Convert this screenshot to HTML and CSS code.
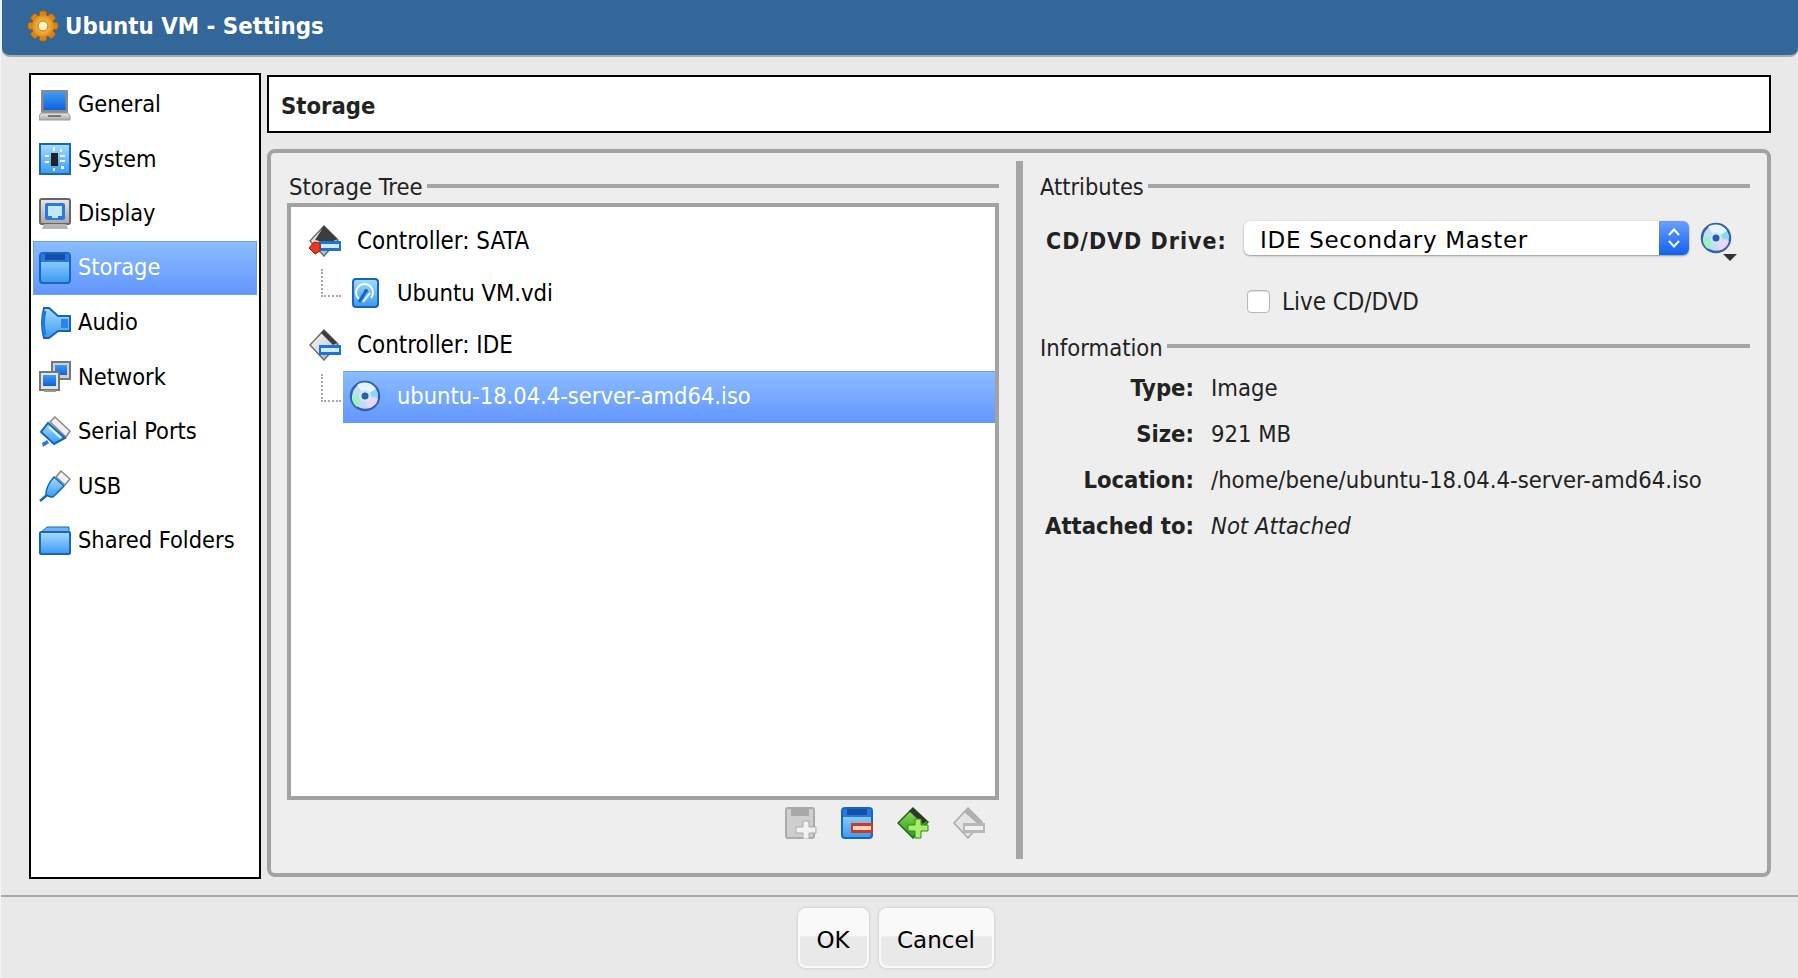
FILE: index.html
```html
<!DOCTYPE html>
<html lang="en">
<head>
<meta charset="utf-8">
<title>Ubuntu VM - Settings</title>
<link rel="stylesheet" href="styles.css">
</head>
<body>
<svg class="defs" width="0" height="0" aria-hidden="true">
  <defs>
    <linearGradient id="blue" x1="0" y1="0" x2="0" y2="1"><stop offset="0" stop-color="#a8dcff"/><stop offset="1" stop-color="#3a9af0"/></linearGradient>
    <linearGradient id="screen" x1="0" y1="0" x2="0" y2="1"><stop offset="0" stop-color="#3f9bf5"/><stop offset="1" stop-color="#0f62e0"/></linearGradient>
    <linearGradient id="gray" x1="0" y1="0" x2="0" y2="1"><stop offset="0" stop-color="#e8e8e8"/><stop offset="1" stop-color="#a8a8a8"/></linearGradient>
    <linearGradient id="ctrlbody" x1="0" y1="0" x2="1" y2="1"><stop offset="0" stop-color="#fafafa"/><stop offset=".55" stop-color="#d8d8d8"/><stop offset="1" stop-color="#8c8c8c"/></linearGradient>
    <linearGradient id="green" x1="0" y1="0" x2="0" y2="1"><stop offset="0" stop-color="#8fe05a"/><stop offset="1" stop-color="#2c9a1c"/></linearGradient>
    <radialGradient id="goldg"><stop offset="0" stop-color="#ffe27a"/><stop offset="1" stop-color="#e08a10"/></radialGradient>

    <symbol id="i-floppy" viewBox="0 0 32 32">
      <rect x="1" y="1" width="30" height="30" rx="3" fill="url(#blue)" stroke="#1666c0" stroke-width="2"/>
      <rect x="2" y="2" width="28" height="8" fill="#2a78dc"/>
      <rect x="6" y="2" width="20" height="6" fill="#154fa8"/>
    </symbol>
    <symbol id="i-cd" viewBox="0 0 32 32">
      <circle cx="16" cy="16" r="14" fill="#c4dcf6" stroke="#2f62a8" stroke-width="2.500"/>
      <path d="M16 16 L8 5 A13 13 0 0 1 27 9 Z" fill="#e6f4ff"/>
      <path d="M16 16 L27 9 A13 13 0 0 1 29 17 Z" fill="#8cd6f8"/>
      <path d="M16 16 L8 27 A13 13 0 0 1 3 15 Z" fill="#9ff0c2"/>
      <path d="M16 16 L29 19 A13 13 0 0 1 19 28.500 Z" fill="#efd4fa"/>
      <circle cx="16" cy="16" r="6" fill="#d0e6fa"/>
      <circle cx="16" cy="16" r="3.500" fill="#2a60a8"/>
    </symbol>
    <symbol id="i-ctrl" viewBox="0 0 32 32">
      <path d="M15 1 L29 15 L15 31 L1 16 Z" fill="url(#ctrlbody)" stroke="#6e6e6e" stroke-width="1.500"/>
      <path d="M15 1 L28 14 L24 16 L12 4 Z" fill="#3c3c3c"/>
      <rect x="10" y="16" width="22" height="10" fill="#1c74d8"/>
      <rect x="12" y="19" width="18" height="4" fill="#cfeaff"/>
    </symbol>
  </defs>
</svg>

<div class="window">
  <header class="titlebar">
    <svg class="icon" viewBox="0 0 32 32" aria-hidden="true">
      <g fill="#d98412" stroke="#a86208" stroke-width=".8">
        <rect x="12.500" y="1" width="7" height="30" rx="2"/>
        <rect x="1" y="12.500" width="30" height="7" rx="2"/>
        <rect x="12.500" y="1" width="7" height="30" rx="2" transform="rotate(45 16 16)"/>
        <rect x="12.500" y="1" width="7" height="30" rx="2" transform="rotate(-45 16 16)"/>
      </g>
      <circle cx="16" cy="16" r="11" fill="url(#goldg)"/>
      <circle cx="16" cy="16" r="5" fill="#fff1c0" stroke="#b87510"/>
    </svg>
    <span class="title-text">Ubuntu VM - Settings</span>
  </header>

  <div class="content">
    <nav class="sidebar">
      <div class="nav-item">
        <svg class="icon" viewBox="0 0 32 32" aria-hidden="true">
          <rect x="2" y="1" width="27" height="23" rx="1" fill="#8a8a8a"/>
          <rect x="4.500" y="3" width="22" height="18" fill="url(#screen)"/>
          <path d="M2 24 H29 L31 27 V31 H0 V27 Z" fill="url(#gray)" stroke="#999"/>
          <rect x="9" y="26" width="13" height="2" fill="#777"/>
        </svg>
        <span>General</span>
      </div>
      <div class="nav-item">
        <svg class="icon" viewBox="0 0 32 32" aria-hidden="true">
          <rect x="1" y="1" width="30" height="30" fill="url(#blue)" stroke="#1666c0" stroke-width="2"/>
          <rect x="12" y="10" width="7" height="13" fill="#222"/>
          <path d="M21 6 h2 v3 h-2 z M21 12 h5 v2 h-5 z M21 17 h5 v2 h-5 z M6 12 h4 v2 h-4 z M6 18 h4 v2 h-4 z M14 4 h2 v4 h-2 z M14 25 h2 v3 h-2 z M22 23 h3 v3 h-3 z" fill="#e8f6ff"/>
        </svg>
        <span>System</span>
      </div>
      <div class="nav-item">
        <svg class="icon" viewBox="0 0 32 32" aria-hidden="true">
          <rect x="1" y="1" width="30" height="25" rx="2" fill="url(#gray)" stroke="#666" stroke-width="2"/>
          <rect x="6" y="5" width="20" height="17" rx="2" fill="#2a78e0"/>
          <rect x="9" y="8" width="14" height="10" fill="#bfe8ff"/>
          <rect x="13" y="18" width="6" height="2" fill="#bfe8ff"/>
          <path d="M5 26 H27 L29 31 H3 Z" fill="#b5b5b5"/>
        </svg>
        <span>Display</span>
      </div>
      <div class="nav-item nav-active">
        <svg class="icon" aria-hidden="true"><use href="#i-floppy"/></svg>
        <span>Storage</span>
      </div>
      <div class="nav-item">
        <svg class="icon" viewBox="0 0 32 32" aria-hidden="true">
          <path d="M5 1 H10 L19 9 H31 V24 H19 L10 31 H5 Q1 16 5 1 Z" fill="url(#blue)" stroke="#1666c0" stroke-width="2"/>
          <path d="M6 4 Q3 16 6 28" fill="none" stroke="#1f7ae0" stroke-width="3"/>
          <rect x="22" y="12" width="7" height="9" fill="#2a84e8"/>
        </svg>
        <span>Audio</span>
      </div>
      <div class="nav-item">
        <svg class="icon" viewBox="0 0 32 32" aria-hidden="true">
          <rect x="13" y="1" width="18" height="17" fill="#d0d0d0" stroke="#777" stroke-width="2"/>
          <rect x="16" y="4" width="12" height="10" fill="url(#screen)"/>
          <rect x="1" y="11" width="19" height="18" fill="#e4e4e4" stroke="#777" stroke-width="2"/>
          <rect x="4" y="14" width="13" height="11" fill="url(#screen)"/>
          <rect x="5" y="29" width="12" height="2" fill="#999"/>
        </svg>
        <span>Network</span>
      </div>
      <div class="nav-item">
        <svg class="icon" viewBox="0 0 32 32" aria-hidden="true">
          <path d="M16 1 L31 15 L27 21 L11 6 Z" fill="#eee" stroke="#888" stroke-width="1.500"/>
          <path d="M9 7 L26 22 L15 28 L2 16 Z" fill="url(#blue)" stroke="#1666c0" stroke-width="2"/>
          <path d="M3 27 L8 24 L10 27 L4 31 Z" fill="#2a78e0"/>
          <path d="M10 11 L22 22" stroke="#e2f4ff" stroke-width="2"/>
        </svg>
        <span>Serial Ports</span>
      </div>
      <div class="nav-item">
        <svg class="icon" viewBox="0 0 32 32" aria-hidden="true">
          <path d="M22 1 L31 9 L26 15 L17 7 Z" fill="#f0f0f0" stroke="#888" stroke-width="1.500"/>
          <path d="M15 7 L25 16 L14 27 Q9 27 7 24 Q7 16 15 7 Z" fill="url(#blue)" stroke="#1666c0" stroke-width="1.500"/>
          <path d="M8 25 L1 31" stroke="#1666c0" stroke-width="2.500"/>
        </svg>
        <span>USB</span>
      </div>
      <div class="nav-item">
        <svg class="icon" viewBox="0 0 32 32" aria-hidden="true">
          <path d="M1 8 L8 2 H30 V8 Z" fill="#6cb4f4" stroke="#1666c0"/>
          <rect x="1" y="7" width="30" height="22" rx="1" fill="url(#blue)" stroke="#1666c0" stroke-width="2"/>
        </svg>
        <span>Shared Folders</span>
      </div>
    </nav>

    <main class="main">
      <div class="page-header">Storage</div>
      <section class="panel">
        <div class="tree-col">
          <div class="legend legend-tree"><span>Storage Tree</span><i class="legend-line"></i></div>
          <div class="tree">
            <div class="tree-row tree-ctrl">
              <svg class="icon" viewBox="0 0 32 32" aria-hidden="true">
                <use href="#i-ctrl"/>
                <path d="M15 1 L28 14 L24 16 H10 L6 15 Z" fill="#3c3c3c"/>
                <path d="M5 17 L0 23 L6 29 L11 26 V18 Z" fill="#e83a20" stroke="#a81c0c"/>
              </svg>
              <span>Controller: SATA</span>
            </div>
            <div class="tree-row tree-child">
              <svg class="icon" viewBox="0 0 32 32" aria-hidden="true">
                <rect x="4" y="2" width="25" height="28" rx="3" fill="url(#blue)" stroke="#1666c0" stroke-width="2"/>
                <path d="M10 22 A8.500 8.500 0 1 1 22 21" fill="none" stroke="#f0faff" stroke-width="2"/>
                <path d="M17 14 L10 25" stroke="#1666c0" stroke-width="3"/>
                <path d="M21 16 L14 25" stroke="#f0faff" stroke-width="2"/>
                <circle cx="17" cy="14" r="2" fill="#1666c0"/>
              </svg>
              <span>Ubuntu VM.vdi</span>
            </div>
            <div class="tree-row tree-ctrl">
              <svg class="icon" aria-hidden="true"><use href="#i-ctrl"/></svg>
              <span>Controller: IDE</span>
            </div>
            <div class="tree-row tree-child tree-selected">
              <svg class="icon" aria-hidden="true"><use href="#i-cd"/></svg>
              <span>ubuntu-18.04.4-server-amd64.iso</span>
            </div>
          </div>
          <div class="tree-tools">
            <svg class="icon" viewBox="0 0 32 32" aria-hidden="true">
              <rect x="1" y="1" width="28" height="30" rx="2" fill="#cfcfcf" stroke="#aaa" stroke-width="2"/>
              <rect x="6" y="2" width="18" height="7" fill="#a8a8a8"/>
              <path d="M18 14 h6 v6 h7 v6 h-7 v6 h-6 v-6 h-7 v-6 h7 z" fill="#f2f2f2" stroke="#aaa"/>
            </svg>
            <svg class="icon" viewBox="0 0 32 32" aria-hidden="true">
              <use href="#i-floppy"/>
              <rect x="10" y="16" width="22" height="10" fill="#cc3c20"/>
              <rect x="12" y="19" width="18" height="4" fill="#f4d4c4"/>
            </svg>
            <svg class="icon" viewBox="0 0 32 32" aria-hidden="true">
              <path d="M16 1 L31 15 L16 31 L1 16 Z" fill="url(#green)" stroke="#1c6a12" stroke-width="1.500"/>
              <path d="M16 1 L30 14 L26 17 L12 4 Z" fill="#333"/>
              <path d="M18 12 h6 v6 h7 v6 h-7 v7 h-6 v-7 h-7 v-6 h7 z" fill="#a8ee6a" stroke="#2c8a1c"/>
            </svg>
            <svg class="icon" viewBox="0 0 32 32" aria-hidden="true">
              <path d="M15 1 L29 15 L15 31 L1 16 Z" fill="#e4e4e4" stroke="#aaa" stroke-width="1.500"/>
              <path d="M15 1 L29 15 L25 17 L11 5 Z" fill="#b0b0b0"/>
              <rect x="10" y="16" width="22" height="10" fill="#b8b8b8"/>
              <rect x="12" y="19" width="18" height="4" fill="#f0f0f0"/>
            </svg>
          </div>
        </div>

        <div class="splitter"></div>

        <div class="attr-col">
          <div class="legend legend-attr"><span>Attributes</span><i class="legend-line"></i></div>
          <div class="drive-row">
            <label class="drive-label">CD/DVD Drive:</label>
            <div class="combo">
              <span class="combo-text">IDE Secondary Master</span>
              <span class="combo-arrows">
                <svg viewBox="0 0 16 24" width="16" height="24" aria-hidden="true"><path d="M3 9 L8 3.500 L13 9 M3 15 L8 20.500 L13 15" fill="none" stroke="#fff" stroke-width="2"/></svg>
              </span>
            </div>
            <div class="cd-button">
              <svg class="icon" aria-hidden="true"><use href="#i-cd"/></svg>
              <i class="caret"></i>
            </div>
          </div>
          <div class="live-row">
            <span class="checkbox"></span>
            <span>Live CD/DVD</span>
          </div>
          <div class="legend legend-info"><span>Information</span><i class="legend-line"></i></div>
          <dl class="info">
            <dt>Type:</dt><dd>Image</dd>
            <dt>Size:</dt><dd>921 MB</dd>
            <dt>Location:</dt><dd>/home/bene/ubuntu-18.04.4-server-amd64.iso</dd>
            <dt>Attached to:</dt><dd class="info-em">Not Attached</dd>
          </dl>
        </div>
      </section>
    </main>
  </div>

  <footer class="footer">
    <button class="btn btn-ok">OK</button>
    <button class="btn btn-cancel">Cancel</button>
  </footer>
</div>
</body>
</html>
```
FILE: styles.css
```css
* { box-sizing: border-box; }

html, body {
  margin: 0;
  height: 100%;
  overflow: hidden;
}

body {
  background: #f6f6f6;
  color: #000;
  font-family: "DejaVu Sans", "Liberation Sans", sans-serif;
  font-stretch: condensed;
  font-size: 23.6px;
}

.defs { position: absolute; }

.icon {
  width: 32px;
  height: 32px;
  flex: none;
  display: block;
}

.window {
  height: 978px;
  margin-left: 1px;
  background: #e9e9e9;
  display: flex;
  flex-direction: column;
}

.titlebar {
  height: 57px;
  margin-left: 1px;
  background: #336699;
  border-bottom: 2px solid #a9a9a9;
  border-radius: 0 0 8px 8px;
  display: flex;
  align-items: center;
  padding: 0 0 4px 25px;
  gap: 6px;
}

.title-text {
  color: #fff;
  font-weight: 700;
  font-size: 23.8px;
}

.content {
  height: 838px;
  padding: 16px 0 0 28px;
  display: flex;
  gap: 6px;
}

.sidebar {
  width: 232px;
  height: 806px;
  background: #fff;
  border: 2px solid #000;
  padding: 2.5px 2px 0;
}

.nav-item {
  height: 54.5px;
  display: flex;
  align-items: center;
  gap: 7px;
  padding-left: 6px;
  font-size: 23.4px;
}

.nav-item span { margin-top: -1.5px; }

.nav-active {
  height: 54px;
  margin-bottom: 0.5px;
  color: #fff;
  background: linear-gradient(#8abcff, #6296ff);
  border: 1px solid #6d9fff;
  padding-left: 5px;
}

.main {
  width: 1504px;
  padding-top: 2px;
  display: flex;
  flex-direction: column;
  gap: 16px;
}

.page-header {
  height: 58px;
  background: #fff;
  border: 2px solid #000;
  padding: 3px 0 0 12px;
  display: flex;
  align-items: center;
  font-weight: 700;
  font-size: 23.6px;
  color: #222;
}

.panel {
  height: 728px;
  background: #eee;
  border: 4px solid #a2a2a2;
  border-radius: 8px;
  padding-top: 8px;
  display: flex;
  color: #222;
}

.tree-col {
  width: 745px;
  padding: 10px 17px 0 16px;
}

.legend {
  height: 32px;
  display: flex;
  align-items: center;
  gap: 4px;
}

.legend-tree { padding-left: 2px; }

.legend-attr { font-size: 23.4px; }

.legend-line {
  flex: 1;
  height: 4px;
  margin-top: -2px;
  background: #a5a5a5;
}

.tree {
  height: 597px;
  background: #fff;
  border: 4px solid #a2a2a2;
  padding-top: 8px;
  color: #000;
}

.tree-row {
  position: relative;
  height: 52px;
  display: flex;
  align-items: center;
  gap: 16px;
  padding-left: 18px;
  font-size: 23.6px;
}

.tree-ctrl { font-size: 23.9px; }

.tree-row span { margin-top: -1px; }

.tree-child {
  margin-left: 52px;
  padding-left: 6px;
  gap: 16px;
}

.tree-child::before {
  content: "";
  position: absolute;
  left: -22px;
  top: 2px;
  width: 18px;
  height: 26px;
  border-left: 2px dotted #aaa;
  border-bottom: 2px dotted #aaa;
}

.tree-selected {
  color: #fff;
  background: linear-gradient(#8abcff, #6296ff);
  border-top: 1px solid #6d9fff;
  padding-bottom: 3px;
  font-size: 23.45px;
}

.tree-tools {
  padding: 7px 14px 0 0;
  display: flex;
  justify-content: flex-end;
  gap: 24px;
}

.splitter {
  width: 7px;
  height: 698px;
  background: #a5a5a5;
  flex: none;
}

.attr-col {
  flex: 1;
  padding: 10px 17px 0 17px;
}

.drive-row {
  margin-top: 18px;
  height: 34px;
  padding-left: 6px;
  display: flex;
  align-items: center;
}

.drive-label {
  width: 198px;
  flex: none;
  padding-top: 6px;
  font-weight: 700;
  font-size: 23px;
  letter-spacing: 1px;
}

.combo {
  width: 445px;
  height: 34px;
  flex: none;
  background: #fff;
  border-radius: 6px;
  box-shadow: 0 1px 2px #999, 0 0 1px #bbb;
  display: flex;
  align-items: center;
  justify-content: space-between;
  padding-left: 16px;
  overflow: hidden;
  color: #000;
}

.combo-text {
  padding-top: 4px;
  font-stretch: normal;
  font-size: 23px;
  letter-spacing: 0.7px;
}

.combo-arrows {
  width: 30px;
  height: 34px;
  background: linear-gradient(#6b9ffb, #0f62f0);
  display: flex;
  align-items: center;
  justify-content: center;
}

.cd-button {
  position: relative;
  margin-left: 11px;
}

.caret {
  position: absolute;
  left: 23px;
  top: 32px;
  border-style: solid;
  border-width: 7px 7px 0;
  border-color: #333 transparent transparent;
}

.live-row {
  margin: 35px 0 0 207px;
  height: 23px;
  display: flex;
  align-items: center;
  gap: 12px;
  font-size: 23.9px;
}

.checkbox {
  width: 23px;
  height: 23px;
  background: #fff;
  border: 1px solid #b8b8b8;
  border-radius: 4px;
  box-shadow: inset 0 1px 1px #ddd;
}

.legend-info { margin-top: 18px; }

.legend-info span { margin-top: 2px; }

.info {
  margin: 2px 0 0;
  display: grid;
  grid-template-columns: 154px auto;
  grid-auto-rows: 46px;
  column-gap: 17px;
  align-items: center;
}

.info dt {
  text-align: right;
  font-weight: 700;
  font-size: 23.6px;
}

.info dd { margin: 0; }

.info-em { font-style: italic; }

.footer {
  height: 83px;
  border-top: 2px solid #a9a9a9;
  padding: 11px 8px 0 0;
  display: flex;
  justify-content: center;
  align-items: flex-start;
  gap: 10px;
}

.btn {
  height: 60px;
  border: 2px solid #fafafa;
  border-radius: 8px;
  background: linear-gradient(#f9f9f9 0, #f9f9f9 46%, #e9e9e9 48%, #e9e9e9 100%);
  box-shadow: 0 0 3px #bdbdbd;
  font-family: inherit;
  font-stretch: normal;
  font-size: 23px;
  color: #000;
  padding: 3px 0 0;
}

.btn-ok { width: 71px; }
.btn-cancel { width: 115px; }
```
